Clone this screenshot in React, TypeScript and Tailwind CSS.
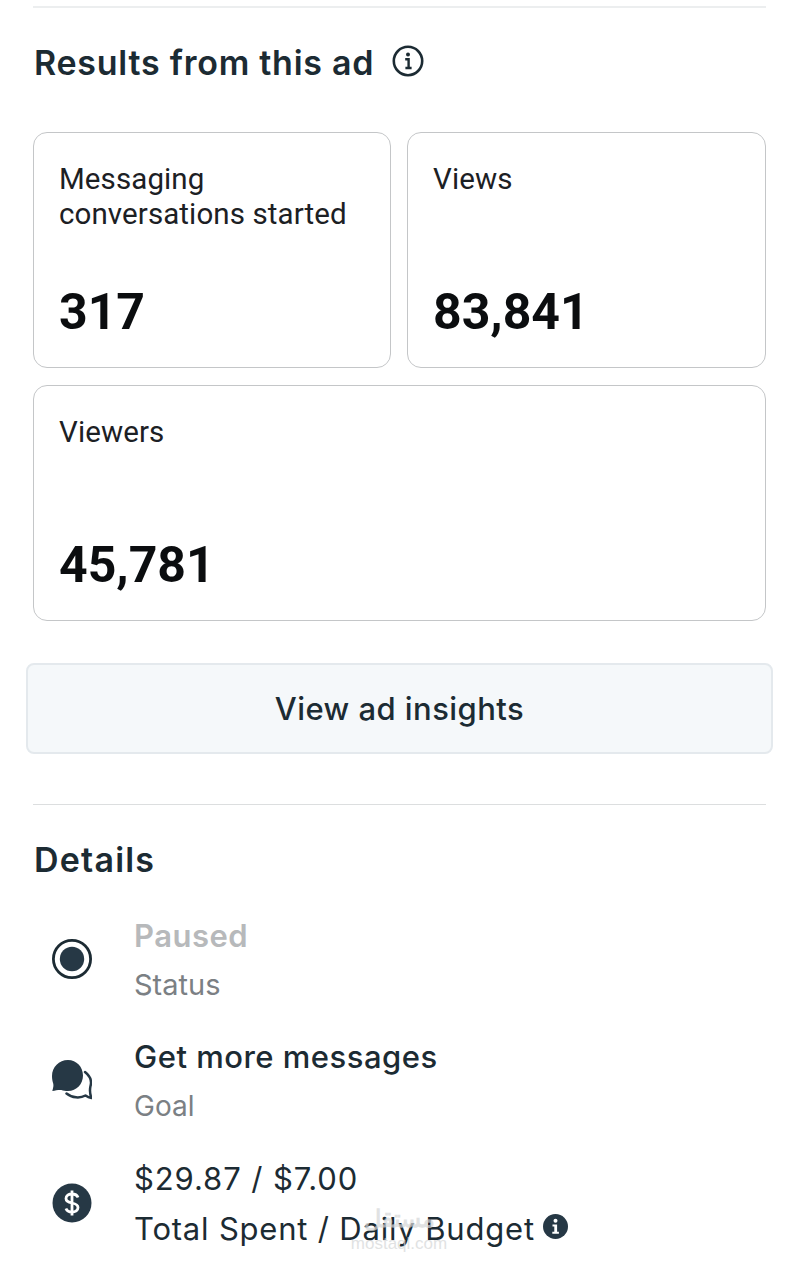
import React from "react";

function Metric({ label, value, className }: { label: React.ReactNode; value: string; className?: string }) {
  return (
    <div className={`h-[236px] rounded-[14px] border border-[#c4c6c8] bg-white pl-[25px] pt-[29px] flex flex-col ${className ?? ""}`}>
      <div className="h-[120px] text-[29.5px] leading-[35px] tracking-[0.1px] text-[#1c2024] font-['Roboto',sans-serif]">{label}</div>
      <div className="text-[50px] leading-[60px] font-bold text-[#0b0d0f] font-['Roboto',sans-serif]">{value}</div>
    </div>
  );
}

function Row({ icon, title, sub, titleClass, subClass, h, colClass }: { icon: React.ReactNode; title: string; sub: React.ReactNode; titleClass: string; subClass: string; h: string; colClass?: string }) {
  return (
    <div className={`flex items-center ${h}`}>
      <div className="w-[101px] flex justify-start pl-[19px] shrink-0">{icon}</div>
      <div className={`flex flex-col ${colClass ?? ""}`}>
        <div className={`text-[31px] leading-[49px] ${titleClass}`}>{title}</div>
        <div className={`${subClass}`}>{sub}</div>
      </div>
    </div>
  );
}

export default function App() {
  return (
    <div className="relative w-[799px] h-[1280px] overflow-hidden bg-white font-['Inter',sans-serif] text-[#1c2b33]">
      <div className="pt-[6px] px-[33px]">
        <div className="h-[2px] bg-[#eceeef]" />
        <div className="flex items-center h-[48px] mt-[31px] pl-[1px]">
          <h2 className="text-[34px] leading-[48px] font-semibold tracking-[0.75px] text-[#1c2b33]">Results from this ad</h2>
          <svg width="32" height="32" viewBox="0 0 32 32" className="ml-[18px] -mt-[4px]" fill="none">
            <circle cx="16" cy="16" r="14.2" stroke="#1c2b33" strokeWidth="2.6" />
            <circle cx="16" cy="9.6" r="2" fill="#1c2b33" />
            <path d="M13.2 14.2H16.6V22.6M13.4 23H19.6" stroke="#1c2b33" strokeWidth="2.4" />
          </svg>
        </div>
        <div className="grid grid-cols-[358px_359px] gap-x-[16px] gap-y-[17px] mt-[45px]">
          <Metric label={<>Messaging<br />conversations started</>} value="317" />
          <Metric label="Views" value="83,841" />
          <Metric label="Viewers" value="45,781" className="col-span-2" />
        </div>
      </div>
      <div className="mx-[26px] mt-[42px] h-[91px] pt-[2px] rounded-[8px] border-2 border-[#e4e9ed] bg-[#f5f8fa] flex items-center justify-center text-[31px] font-medium tracking-[0.45px] text-[#1c2b33]">
        View ad insights
      </div>
      <div className="mx-[33px] mt-[50px] h-px bg-[#dcdedf]" />
      <h2 className="ml-[34px] mt-[31px] text-[34px] leading-[48px] font-semibold tracking-[1.2px] text-[#1c2b33]">Details</h2>
      <div className="mx-[33px] mt-[26px] flex flex-col gap-[21px]">
        <Row
          h="h-[100px]"
          title="Paused"
          titleClass="font-semibold tracking-[0.5px] text-[#b7b9bb]"
          sub="Status"
          subClass="text-[29px] leading-[49px] text-[#7b8084]"
          icon={
            <svg width="40" height="40" viewBox="0 0 40 40" className="-mt-[2px]">
              <circle cx="20" cy="20" r="18.6" fill="none" stroke="#1c2b33" strokeWidth="2.8" />
              <circle cx="20" cy="20" r="12.2" fill="#263845" />
            </svg>
          }
        />
        <Row
          h="h-[100px]"
          colClass="pt-[2px]"
          title="Get more messages"
          titleClass="font-medium tracking-[0.5px] text-[#1c2b33]"
          sub="Goal"
          subClass="text-[28px] leading-[51px] text-[#7b8084]"
          icon={
            <svg width="40" height="40" viewBox="0 0 40 40" className="-mt-[2px]">
              <path d="M33 12C38 16 40 21 38.500 26C37.800 29 37.500 33 39.500 38C37 37.500 35 36.500 33.500 35.500C28 38.500 20 38 14.500 33.500" fill="none" stroke="#263845" strokeWidth="2.500" strokeLinecap="round" strokeLinejoin="round" />
              <path d="M16 0C7 0 0 7 0 16c0 3 .6 5.500 1.200 7.500.5 2 .2 3.500-.9 7.500 3.500-.6 6.500-1.400 9-1 2 .6 4 1 6.700 1 8.600 0 15-7 15-15.500S24.500 0 16 0z" fill="#263845" />
            </svg>
          }
        />
        <Row
          h="h-[100px] mt-[1px]"
          colClass="pt-[2px]"
          title="$29.87 / $7.00"
          titleClass="font-normal tracking-[0.9px] text-[#1c2b33]"
          sub={
            <span className="flex items-center">
              Total Spent / Daily Budget
              <svg width="25" height="25" viewBox="0 0 25 25" className="ml-[8px] -mt-[4px]">
                <circle cx="12.500" cy="12.500" r="12.500" fill="#263845" />
                <circle cx="12.500" cy="6.800" r="2" fill="#fff" />
                <path d="M9.500 10.600h4.600v7.200h1.800v1.900H9.300v-1.900h2v-5.300H9.500z" fill="#fff" />
              </svg>
            </span>
          }
          subClass="text-[31px] leading-[51px] tracking-[0.8px] text-[#1c2b33]"
          icon={
            <svg width="40" height="40" viewBox="0 0 40 40">
              <circle cx="20" cy="20" r="19.500" fill="#263845" />
              <path d="M26 14.500c-.8-2.200-3-3.500-6-3.500-3.400 0-6 1.700-6 4.500s2.500 3.800 6 4.500 6 1.700 6 4.500-2.600 4.500-6 4.500c-3 0-5.200-1.300-6-3.500M20 7.500v25" fill="none" stroke="#fff" strokeWidth="2.800" />
            </svg>
          }
        />
      </div>
      <div className="absolute left-[349px] top-[1203px] w-[100px] text-center pointer-events-none font-['Liberation_Sans',sans-serif] text-[#d5d7d8] opacity-70">
        <div className="text-[24px] leading-[32px] font-bold">مستقل</div>
        <div className="text-[17px] leading-[18px]">mostaql.com</div>
      </div>
    </div>
  );
}
